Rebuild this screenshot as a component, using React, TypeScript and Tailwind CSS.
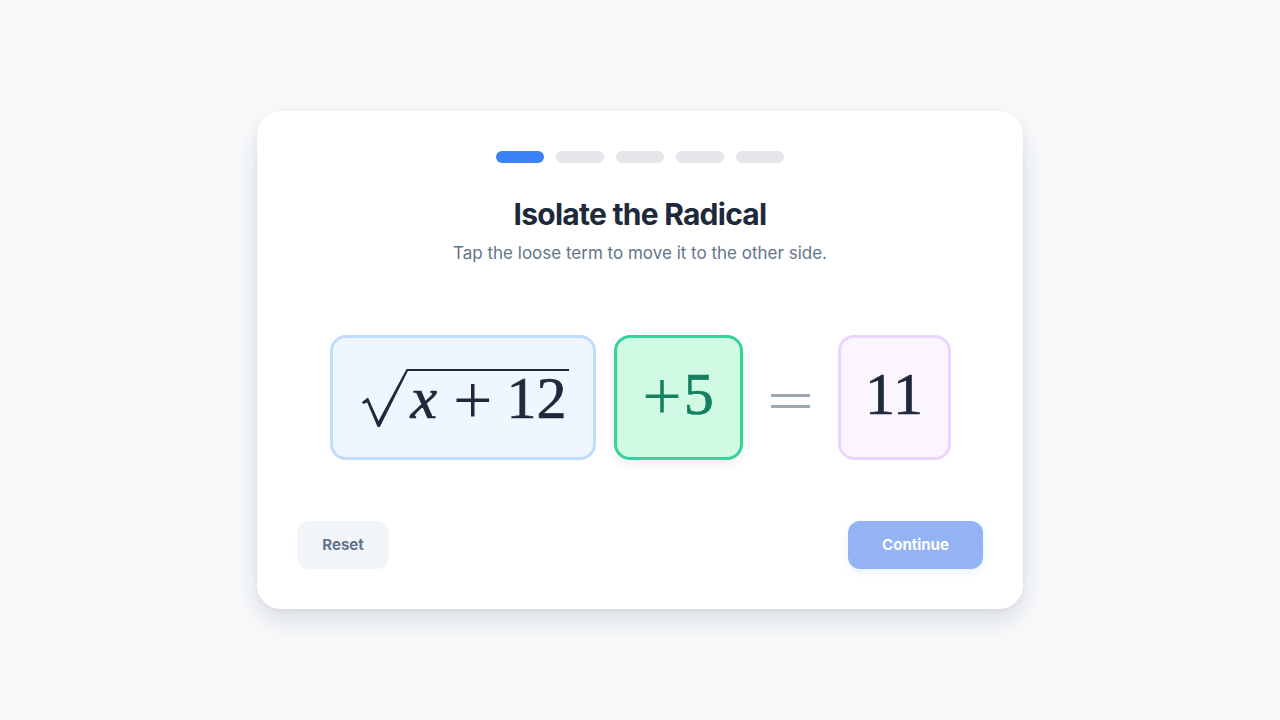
const steps = [true, false, false, false, false];

function Surd() {
  return (
    <svg width="46" height="58" viewBox="0 0 46 58" className="shrink-0 self-start" aria-hidden="true">
      <path
        d="M0 33 L6 28.5 L16.5 52 L44.5 0 L46 0 L46 1.8 L17.8 58 L15.6 58 L5.2 33.5 L1 35 Z"
        fill="#1e293b"
      />
    </svg>
  );
}

function Plus({ className = "" }: { className?: string }) {
  return (
    <span className={"inline-block translate-y-[6px] text-[70px] leading-[0] [-webkit-text-stroke:0px] " + className}>
      +
    </span>
  );
}

export default function App() {
  return (
    <div className="min-h-screen w-full bg-[#f8fafc] flex items-center justify-center font-['Inter',sans-serif]">
      <div className="w-[766px] h-[498px] rounded-3xl bg-white shadow-[0_12px_28px_rgba(15,23,42,0.12),0_2px_6px_rgba(15,23,42,0.05)] px-10 pt-10 pb-10 flex flex-col">
        <div className="flex justify-center gap-3">
          {steps.map((on, i) => (
            <div
              key={i}
              className={on ? "h-3 w-12 rounded-full bg-[#3b82f6]" : "h-3 w-12 rounded-full bg-[#e5e7eb]"}
            />
          ))}
        </div>

        <h1 className="mt-[33px] text-center text-[30px] leading-[36px] font-bold tracking-tight text-[#1e293b]">
          Isolate the Radical
        </h1>
        <p className="mt-[9px] text-center text-[17px] leading-6 text-[#64748b]">
          Tap the loose term to move it to the other side.
        </p>

        <div className="mt-[70px] flex items-center justify-center font-['Liberation_Serif',serif] text-[60px] leading-none [-webkit-text-stroke:0.7px_currentColor]">
          <div className="w-[266px] h-[125px] rounded-2xl border-[3px] border-[#bfdbfe] bg-[#eff6ff] flex items-center justify-center text-[#1e293b] pt-[2px] pl-[6px]">
            <div className="flex items-start">
              <Surd />
              <span className="border-t-2 border-[#1e293b] pl-[2px] pr-[2px] whitespace-nowrap">
                <span className="-mt-[3px] flex items-baseline">
                  <i>x</i>
                  <Plus className="ml-[16px]" />
                  <span className="ml-[14px]">12</span>
                </span>
              </span>
            </div>
          </div>

          <div className="ml-[18px] w-[129px] h-[125px] rounded-2xl border-[3px] border-[#34d399] bg-[#d1fae5] shadow-[0_4px_10px_rgba(15,23,42,0.08)] flex items-center justify-center text-[#15805f] pb-[8px]">
            <span className="flex items-baseline">
              <Plus className="mr-[2px]" />
              <span>5</span>
            </span>
          </div>

          <div className="mx-[28px] mt-[7px] w-[39px] flex flex-col gap-[8px]" role="img" aria-label="=">
            <div className="h-[3px] w-full bg-[#9ca8b4]" />
            <div className="h-[3px] w-full bg-[#9ca8b4]" />
          </div>

          <div className="w-[113px] h-[125px] rounded-2xl border-[3px] border-[#e9d5ff] bg-[#faf5ff] flex items-center justify-center text-[#1e293b] pb-[8px]">
            <span>11</span>
          </div>
        </div>

        <div className="mt-auto flex items-center justify-between">
          <button className="h-12 w-[92px] rounded-xl bg-[#f1f5f9] text-[15px] font-bold text-[#64748b]">
            Reset
          </button>
          <button className="h-12 w-[135px] rounded-xl bg-[#93b3f3] text-[15px] font-bold text-white shadow-[0_3px_8px_rgba(59,130,246,0.12)]">
            Continue
          </button>
        </div>
      </div>
    </div>
  );
}
